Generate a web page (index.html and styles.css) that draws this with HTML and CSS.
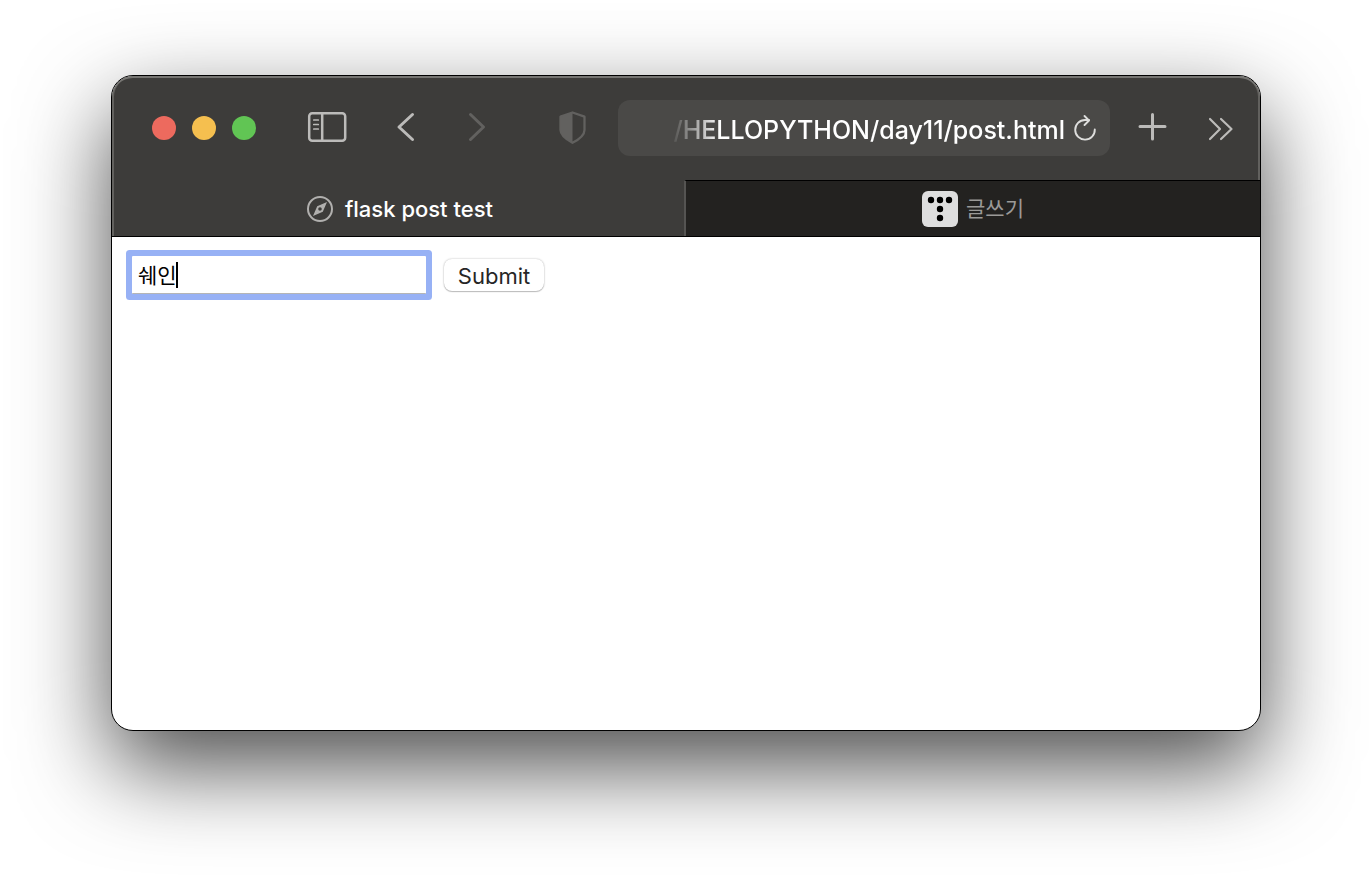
FILE: index.html
```html
<!DOCTYPE html>
<html lang="ko">
<head>
    <meta charset="UTF-8">
    <meta name="viewport" content="width=device-width, initial-scale=1.0">
    <title>flask post test</title>
    <link rel="stylesheet" href="styles.css">
</head>
<body>
    <div class="window">
        <header class="chrome">
            <div class="toolbar">
                <div class="lights">
                    <button class="light red" aria-label="Close"></button>
                    <button class="light yellow" aria-label="Minimize"></button>
                    <button class="light green" aria-label="Zoom"></button>
                </div>
                <button class="tool sidebar" aria-label="Sidebar">
                    <svg viewBox="0 0 40 40">
                        <rect x="2.200" y="6.200" width="36" height="27.600" rx="3" stroke-width="2.500"/>
                        <path d="M15.200 6.200v27.600" stroke-width="2.500"/>
                        <path d="M6.800 13h4.500M6.800 17.500h4.500M6.800 22h4.500" stroke-width="1.700"/>
                    </svg>
                </button>
                <div class="history">
                    <button class="tool" aria-label="Back">
                        <svg viewBox="0 0 40 40"><path d="M26.500 7.500L13 20L26.500 32.500" stroke-width="3"/></svg>
                    </button>
                    <button class="tool dim" aria-label="Forward">
                        <svg viewBox="0 0 40 40"><path d="M13.500 7.500L26.500 20L13.500 32.500" stroke-width="3"/></svg>
                    </button>
                </div>
                <button class="tool dim shield" aria-label="Privacy report">
                    <svg viewBox="0 0 40 40">
                        <path d="M19.500 5.500L31.500 9.700V23C31.500 28 27 32 19.500 35.800C12.500 32 7.500 28 7.500 23V9.700Z" stroke-width="2.300"/>
                        <path class="fill" d="M19.500 5.500L7.500 9.700V23C7.500 28 12.500 32 19.500 35.800Z"/>
                    </svg>
                </button>
                <div class="address">
                    <input class="url" type="text" aria-label="Address" value="/HELLOPYTHON/day11/post.html" readonly>
                    <button class="reload" aria-label="Reload">
                        <svg viewBox="0 0 24 28">
                            <path d="M21.800 15.500A9.800 9.800 0 1 1 12 6H16" stroke-width="1.900"/>
                            <path d="M11.500 2L16 6.500L11.500 11" stroke-width="1.900"/>
                        </svg>
                    </button>
                </div>
                <button class="tool" aria-label="New tab">
                    <svg viewBox="0 0 40 40"><path d="M19.500 7.500v24.500M7 19.500h25" stroke-width="3"/></svg>
                </button>
                <button class="tool more" aria-label="More">
                    <svg viewBox="0 0 40 40"><path d="M9 12L19 22L9 32M20 12L30.500 22L20 32" stroke-width="2.200"/></svg>
                </button>
            </div>
            <nav class="tabs">
                <button class="tab active">
                    <svg class="compass" viewBox="0 0 26 26">
                        <circle cx="13" cy="13" r="12" stroke-width="2"/>
                        <path class="fill" fill-rule="evenodd" d="M20 6L15.800 15.800L6 20L10.200 10.200ZM13 11.200A1.800 1.800 0 1 0 13 14.800A1.800 1.800 0 1 0 13 11.200Z"/>
                    </svg>
                    <span>flask post test</span>
                </button>
                <button class="tab other">
                    <svg class="favicon" viewBox="0 0 36 36">
                        <rect width="36" height="36" rx="6" fill="#dedede"/>
                        <g fill="#000">
                            <circle cx="9" cy="9" r="3.200"/>
                            <circle cx="18" cy="9" r="3.200"/>
                            <circle cx="27" cy="9" r="3.200"/>
                            <circle cx="18" cy="18" r="3.200"/>
                            <circle cx="18" cy="27" r="3.200"/>
                        </g>
                    </svg>
                    <span>글쓰기</span>
                </button>
            </nav>
        </header>
        <main>
            <form class="post" onsubmit="return false">
                <div class="field">
                    <input class="name" type="text" name="name" aria-label="Name" value="쉐인">
                    <span class="caret"></span>
                </div>
                <button class="submit" type="submit">Submit</button>
            </form>
        </main>
    </div>
</body>
</html>
```

FILE: styles.css
```css
* {
    box-sizing: border-box;
}
body {
    margin: 0;
    min-height: 100vh;
    padding: 75px 111px 147px;
    display: flex;
    background-color: white;
    font-family: Inter, "Noto Sans CJK KR", sans-serif;
}
button, input {
    font-family: inherit;
    border: none;
    margin: 0;
    padding: 0;
    background: none;
    outline: none;
}
svg {
    display: block;
    fill: none;
    stroke: currentColor;
    stroke-linecap: round;
    stroke-linejoin: round;
}
svg .fill {
    fill: currentColor;
    stroke: none;
}

.window {
    flex: 1;
    min-width: 0;
    display: flex;
    flex-direction: column;
    border: 1px solid black;
    border-radius: 22px;
    overflow: hidden;
    background-color: white;
    box-shadow: 0 36px 90px rgba(0, 0, 0, 0.7);
}
.chrome {
    background-color: #3d3c3a;
    box-shadow: inset 0 2px #767572, inset 2px 0 #62615e, inset -2px 0 #62615e;
    border-radius: 21px 21px 0 0;
    border-bottom: 1px solid black;
}

/* toolbar */
.toolbar {
    height: 104px;
    padding: 0 19px 0 40px;
    display: flex;
    align-items: center;
}
.lights {
    display: flex;
    gap: 16px;
}
.light {
    width: 24px;
    height: 24px;
    border-radius: 50%;
}
.red {
    background-color: #ed6a5e;
}
.yellow {
    background-color: #f5bf4f;
}
.green {
    background-color: #61c554;
}
.tool {
    width: 40px;
    height: 40px;
    flex: none;
    color: #bcbbb9;
    margin-bottom: 2px;
}
.dim {
    color: #62615f;
}
.sidebar {
    margin-left: 51px;
}
.history {
    display: flex;
    gap: 31px;
    margin-left: 39px;
}
.shield {
    margin-left: 56px;
}
.more {
    margin-left: 28px;
}
.address {
    flex: 1;
    min-width: 0;
    height: 56px;
    margin: 0 23px 0 25px;
    padding: 0 13px 0 52px;
    display: flex;
    align-items: center;
    gap: 8px;
    border-radius: 12px;
    background-color: #4a4947;
}
.url {
    flex: 1;
    min-width: 0;
    height: 40px;
    padding-top: 4px;
    color: white;
    font-size: 25px;
    font-weight: 500;
    text-align: right;
    -webkit-mask-image: linear-gradient(to right, transparent, black 50px);
    mask-image: linear-gradient(to right, transparent, black 50px);
}
.reload {
    width: 24px;
    height: 28px;
    color: #dddddc;
}

/* tabs */
.tabs {
    display: flex;
    height: 56px;
}
.tab {
    flex: 1 1 50%;
    display: flex;
    align-items: center;
    justify-content: center;
    gap: 8px;
}
.active {
    gap: 12px;
    padding: 2px 0 0 4px;
    color: white;
    font-size: 22px;
    font-weight: 500;
}
.other {
    flex-basis: calc(50% + 4px);
    color: #9b9a98;
    font-size: 21px;
    line-height: 24px;
    background-color: #232220;
    border-top: 1px solid black;
    border-left: 2px solid #555452;
}
.compass {
    width: 26px;
    height: 26px;
    color: #b1b0ae;
}
.favicon {
    width: 36px;
    height: 36px;
    stroke: none;
}

/* page */
main {
    flex: 1;
    padding: 19px 20px;
}
.post {
    display: flex;
    align-items: center;
    gap: 18px;
}
.field {
    position: relative;
}
.name {
    display: block;
    width: 294px;
    height: 38px;
    padding: 0 6px 1px;
    font-size: 21px;
    color: black;
    border-bottom: 1px solid #b5b5b5;
    box-shadow: 0 0 0 6px #97b1f5;
    border-radius: 1px;
}
.caret {
    position: absolute;
    left: 44px;
    top: 6px;
    width: 2px;
    height: 26px;
    background-color: black;
}
.submit {
    width: 100px;
    height: 32px;
    padding-top: 2px;
    font-size: 22px;
    color: #262626;
    border-radius: 8px;
    background-color: white;
    box-shadow: 0 0 2px rgba(0, 0, 0, 0.3), 0 1px 1px rgba(0, 0, 0, 0.2);
}
```
